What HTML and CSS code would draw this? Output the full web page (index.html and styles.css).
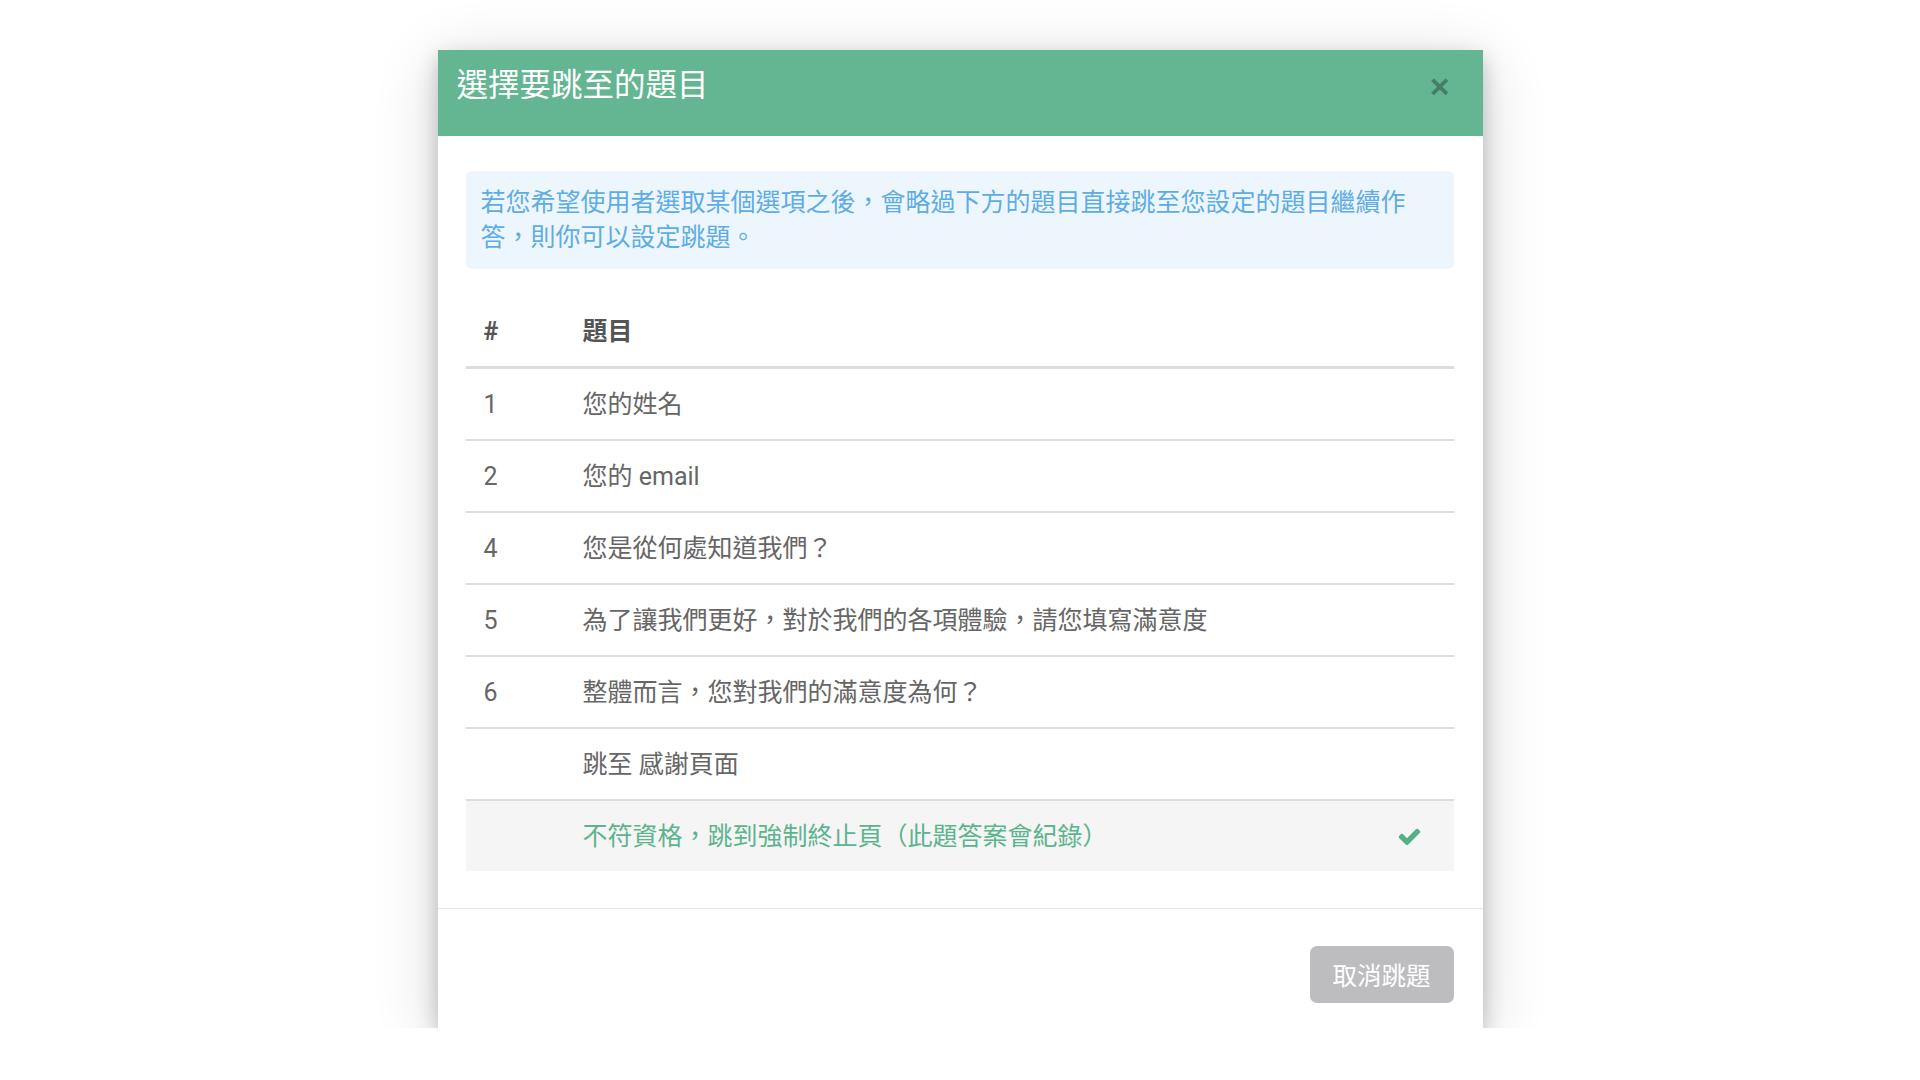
FILE: index.html
```html
<!DOCTYPE html>
<html lang="zh-Hant">
<head>
    <meta charset="UTF-8">
    <title>選擇要跳至的題目</title>
    <link rel="stylesheet" href="styles.css">
</head>
<body>
<div class="modal">
    <div class="modal-header">
        <h4 class="modal-title">選擇要跳至的題目</h4>
        <button type="button" class="close">&times;</button>
    </div>
    <div class="modal-body">
        <div class="alert-info">若您希望使用者選取某個選項之後，會略過下方的題目直接跳至您設定的題目繼續作答，則你可以設定跳題。</div>
        <table class="jump-table">
            <colgroup>
                <col class="col-num">
                <col>
                <col class="col-check">
            </colgroup>
            <thead>
                <tr>
                    <th>#</th>
                    <th>題目</th>
                    <th></th>
                </tr>
            </thead>
            <tbody>
                <tr>
                    <td>1</td>
                    <td>您的姓名</td>
                    <td></td>
                </tr>
                <tr>
                    <td>2</td>
                    <td>您的 email</td>
                    <td></td>
                </tr>
                <tr>
                    <td>4</td>
                    <td>您是從何處知道我們？</td>
                    <td></td>
                </tr>
                <tr>
                    <td>5</td>
                    <td>為了讓我們更好，對於我們的各項體驗，請您填寫滿意度</td>
                    <td></td>
                </tr>
                <tr>
                    <td>6</td>
                    <td>整體而言，您對我們的滿意度為何？</td>
                    <td></td>
                </tr>
                <tr>
                    <td></td>
                    <td>跳至 感謝頁面</td>
                    <td></td>
                </tr>
                <tr class="selected">
                    <td></td>
                    <td>不符資格，跳到強制終止頁（此題答案會紀錄）</td>
                    <td class="check-cell">
                        <svg class="check" viewBox="0 0 1792 1792" width="25" height="25"><path d="M1671 566q0 40-28 68l-724 724-136 136q-28 28-68 28t-68-28l-136-136-362-362q-28-28-28-68t28-68l136-136q28-28 68-28t68 28l294 295 656-657q28-28 68-28t68 28l136 136q28 28 28 68z"/></svg>
                    </td>
                </tr>
            </tbody>
        </table>
    </div>
    <div class="modal-footer">
        <button type="button" class="btn-cancel">取消跳題</button>
    </div>
</div>
</body>
</html>
```

FILE: styles.css
```css
body {
    margin: 0;
    background: #fff;
    font-family: Roboto, "Noto Sans CJK TC", sans-serif;
    font-size: 25px;
    line-height: 35px;
    color: #666;
}
.modal {
    width: 1045px;
    margin: 50px auto 0;
    background: #fff;
    box-shadow: 0 8px 20px rgba(0, 0, 0, 0.22), 0 12px 60px rgba(0, 0, 0, 0.16);
}
.modal-header {
    display: flex;
    align-items: flex-start;
    justify-content: space-between;
    height: 86px;
    padding: 14px 33px 0 19px;
    box-sizing: border-box;
    background: #64b592;
}
.modal-title {
    margin: 0;
    font-size: 31.5px;
    font-weight: normal;
    line-height: 44px;
    color: #fff;
}
.close {
    margin-top: 5px;
    padding: 0;
    border: 0;
    background: none;
    font-family: "Liberation Sans", Arial, sans-serif;
    font-size: 34px;
    font-weight: bold;
    line-height: 1;
    color: #000;
    opacity: 0.3;
    cursor: pointer;
}
.modal-body {
    padding: 35px 29px 37px 28px;
}
.alert-info {
    padding: 14px 40px 14px 15px;
    margin-bottom: 28px;
    background: #eef6fd;
    border-radius: 6px;
    color: #5eade2;
}
.jump-table {
    width: 100%;
    table-layout: fixed;
    border-collapse: collapse;
}
.jump-table .col-num {
    width: 99px;
}
.jump-table .col-check {
    width: 80px;
}
.jump-table th,
.jump-table td {
    text-align: left;
    vertical-align: middle;
    padding: 17.5px 18px;
}
.jump-table th {
    padding-top: 17px;
    padding-bottom: 17px;
    border-bottom: 3px solid #ddd;
    font-weight: bold;
    color: #555;
}
.jump-table tbody tr + tr td {
    border-top: 2px solid #ddd;
}
.jump-table .check-cell {
    padding-right: 32px;
}
.jump-table tr.selected td {
    background: #f5f5f6;
    color: #5cb48e;
}
.check {
    display: block;
    margin-left: auto;
    fill: #52b186;
}
.modal-footer {
    display: flex;
    justify-content: flex-end;
    padding: 37px 29px 25px;
    border-top: 1px solid #e8e8e8;
}
.btn-cancel {
    height: 57px;
    padding: 0 23px;
    border: 0;
    border-radius: 7px;
    background: #bdbcbf;
    font-family: Roboto, "Noto Sans CJK TC", sans-serif;
    font-size: 24.5px;
    color: #fff;
    cursor: pointer;
}
```
